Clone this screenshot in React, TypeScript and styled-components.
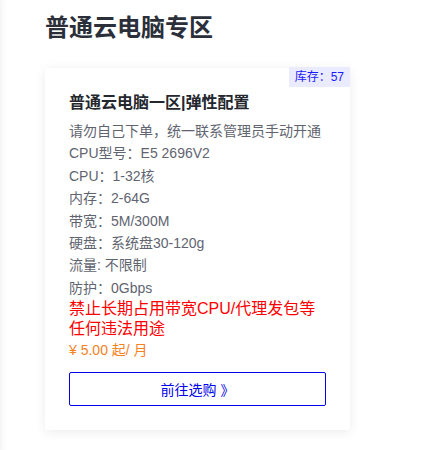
import * as React from 'react';
import styled, { createGlobalStyle } from 'styled-components';

const GlobalStyle = createGlobalStyle`
  html, body {
    margin: 0;
    padding: 0;
    background: #ffffff;
  }
  * {
    box-sizing: border-box;
  }
`;

const specs = [
  'CPU型号：E5 2696V2',
  'CPU：1-32核',
  '内存：2-64G',
  '带宽：5M/300M',
  '硬盘：系统盘30-120g',
  '流量: 不限制',
  '防护：0Gbps',
];

const App = () => {
  return (
    <>
      <GlobalStyle />
      <Page>
        <Heading>普通云电脑专区</Heading>
        <Card>
          <Stock>库存：57</Stock>
          <CardTitle>普通云电脑一区|弹性配置</CardTitle>
          <Line>请勿自己下单，统一联系管理员手动开通</Line>
          {specs.map((s) => (
            <Line key={s}>{s}</Line>
          ))}
          <Warning>禁止长期占用带宽CPU/代理发包等任何违法用途</Warning>
          <Price>¥ 5.00 起/ 月</Price>
          <BuyButton>前往选购 》</BuyButton>
        </Card>
      </Page>
    </>
  );
};

export default App;

const Page = styled.div`
  min-height: 100vh;
  padding: 10px 45px 20px;
  font-family: "Liberation Sans", "Noto Sans CJK SC", sans-serif;
  box-shadow: inset 9px 0 9px -9px rgba(0, 0, 0, 0.08);
`;

const Heading = styled.h1`
  margin: 0 0 22px;
  font-size: 24px;
  line-height: 36px;
  font-weight: 700;
  color: #2b2f3a;
`;

const Card = styled.div`
  position: relative;
  width: 305px;
  padding: 24px 24px 24px;
  background: #ffffff;
  box-shadow: 0 2px 12px rgba(0, 0, 0, 0.08);
  border-radius: 2px;
`;

const Stock = styled.div`
  position: absolute;
  top: -1px;
  right: 0;
  padding: 0 6px;
  height: 20px;
  line-height: 20px;
  font-size: 12px;
  color: #1a1aff;
  background: #ebebff;
`;

const CardTitle = styled.div`
  margin-bottom: 6px;
  font-size: 16px;
  line-height: 22px;
  font-weight: 700;
  color: #24272e;
`;

const Line = styled.div`
  font-size: 14px;
  line-height: 22.4px;
  color: #5f6470;
`;

const Warning = styled.div`
  font-size: 16px;
  line-height: 20px;
  color: #ff0000;
`;

const Price = styled.div`
  font-size: 14px;
  line-height: 22.4px;
  color: #f5821f;
`;

const BuyButton = styled.button`
  display: block;
  width: 100%;
  height: 34px;
  margin-top: 10px;
  padding: 0;
  font-family: inherit;
  font-size: 14px;
  color: #0000ee;
  background: #ffffff;
  border: 1px solid #0000ee;
  border-radius: 2px;
  cursor: pointer;
`;
